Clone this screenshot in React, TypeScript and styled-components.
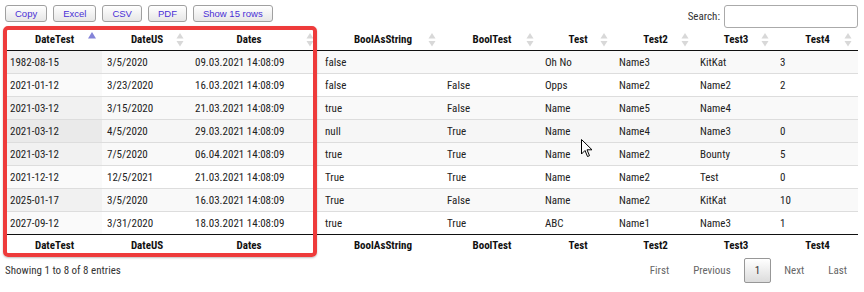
import React from "react";
import styled, { createGlobalStyle } from "styled-components";

const Global = createGlobalStyle`
  html, body { margin: 0; padding: 0; background: #fff; }
  body { font-family: "Roboto Condensed", Roboto, "Liberation Sans", sans-serif; color: #333; }
`;

const Page = styled.div`
  position: relative;
  width: 864px;
  height: 292px;
  padding: 5px 6px 0 5px;
  box-sizing: border-box;
  font-size: 11px;
`;

const TopBar = styled.div`
  display: flex;
  justify-content: space-between;
  align-items: flex-start;
  height: 24px;
`;

const ButtonGroup = styled.div`
  display: flex;
  gap: 6px;
`;

const ToolButton = styled.button`
  font-family: "Liberation Sans", Arial, sans-serif;
  font-size: 9.5px;
  line-height: 11px;
  height: 17px;
  padding: 0 9px;
  color: #4a2fd6;
  border: 1px solid #a0a0a0;
  border-radius: 3px;
  background: linear-gradient(to bottom, #ffffff 0%, #e6e6e6 100%);
  cursor: pointer;
`;

const SearchLabel = styled.label`
  display: flex;
  align-items: center;
  gap: 4px;
  font-size: 11px;
  color: #333;
`;

const SearchInput = styled.input`
  width: 134px;
  height: 23px;
  box-sizing: border-box;
  border: 1px solid #aaa;
  border-radius: 3px;
  padding: 2px 4px;
  background: #fff;
`;

const Table = styled.table`
  width: 853px;
  table-layout: fixed;
  border-collapse: separate;
  border-spacing: 0;
  font-size: 11px;
`;

const HeadCell = styled.th<{ $foot?: boolean; $shift?: number }>`
  position: relative;
  font-weight: bold;
  color: #111;
  text-align: center;
  padding: 0 ${(p) => 14 - (p.$shift ?? 0)}px 0 ${(p) => 14 + (p.$shift ?? 0)}px;
  height: 21px;
  line-height: 13px;
  white-space: nowrap;
  ${(p) => (p.$foot ? "border-top: 1px solid #111;" : "border-bottom: 1px solid #111;")}
`;

const SortIcon = styled.svg`
  position: absolute;
  right: 6px;
  top: 3px;
`;

const Row = styled.tr<{ $odd: boolean; $hover: boolean }>`
  background: ${(p) => (p.$hover ? "#f6f6f6" : p.$odd ? "#f9f9f9" : "#ffffff")};
`;

const Cell = styled.td<{ $first: boolean; $sorted: boolean; $bg: string }>`
  height: 22px;
  padding: 0 5px;
  line-height: 13px;
  white-space: nowrap;
  color: #222;
  border-top: ${(p) => (p.$first ? "none" : "1px solid #ddd")};
  background: ${(p) => (p.$sorted ? p.$bg : "transparent")};
`;

const FooterBar = styled.div`
  display: flex;
  justify-content: space-between;
  align-items: flex-start;
  padding-top: 2px;
`;

const Info = styled.div`
  padding-top: 6px;
  font-size: 11px;
  color: #333;
`;

const Paginate = styled.div`
  display: flex;
`;

const PageButton = styled.span<{ $current?: boolean }>`
  display: inline-block;
  box-sizing: border-box;
  height: 25px;
  line-height: 23px;
  padding: 0 10px;
  margin-left: 2px;
  font-size: 11px;
  color: ${(p) => (p.$current ? "#333" : "#666")};
  border: 1px solid ${(p) => (p.$current ? "#979797" : "transparent")};
  border-radius: 2px;
  background: ${(p) => (p.$current ? "linear-gradient(to bottom, #fff 0%, #dcdcdc 100%)" : "transparent")};
`;

const Highlight = styled.div`
  position: absolute;
  left: 3px;
  top: 26px;
  width: 314px;
  height: 231px;
  box-sizing: border-box;
  border: 4px solid #ee3b3b;
  border-radius: 5px;
  pointer-events: none;
  box-shadow: 0 1px 2px rgba(0, 0, 0, 0.25);
`;

const Cursor = styled.svg`
  position: absolute;
  left: 581px;
  top: 139px;
`;

const columns = [
  { name: "DateTest", width: 97, shift: 1 },
  { name: "DateUS", width: 88, shift: 1 },
  { name: "Dates", width: 130, shift: -6 },
  { name: "BoolAsString", width: 122, shift: 2 },
  { name: "BoolTest", width: 98, shift: 1 },
  { name: "Test", width: 74, shift: 1 },
  { name: "Test2", width: 81, shift: 1 },
  { name: "Test3", width: 80, shift: 1 },
  { name: "Test4", width: 83, shift: 1 },
];

const rows: string[][] = [
  ["1982-08-15", "3/5/2020", "09.03.2021 14:08:09", "false", "", "Oh No", "Name3", "KitKat", "3"],
  ["2021-01-12", "3/23/2020", "16.03.2021 14:08:09", "false", "False", "Opps", "Name2", "Name2", "2"],
  ["2021-03-12", "3/15/2020", "21.03.2021 14:08:09", "true", "False", "Name", "Name5", "Name4", ""],
  ["2021-03-12", "4/5/2020", "29.03.2021 14:08:09", "null", "True", "Name", "Name4", "Name3", "0"],
  ["2021-03-12", "7/5/2020", "06.04.2021 14:08:09", "true", "True", "Name", "Name2", "Bounty", "5"],
  ["2021-12-12", "12/5/2021", "21.03.2021 14:08:09", "True", "True", "Name", "Name2", "Test", "0"],
  ["2025-01-17", "3/5/2020", "16.03.2021 14:08:09", "True", "False", "Name", "Name2", "KitKat", "10"],
  ["2027-09-12", "3/31/2020", "18.03.2021 14:08:09", "true", "True", "ABC", "Name1", "Name3", "1"],
];

const HOVER = 3;

function SortBoth() {
  return (
    <SortIcon width="8" height="16" viewBox="0 0 8 16">
      <polygon points="0.5,6.5 4,1 7.5,6.5" fill="#d8d8d8" />
      <polygon points="0.5,9 4,14.5 7.5,9" fill="#d8d8d8" />
    </SortIcon>
  );
}

function SortAsc() {
  return (
    <SortIcon width="8" height="16" viewBox="0 0 8 16">
      <polygon points="0,6.5 4,0 8,6.5" fill="#8383d8" />
    </SortIcon>
  );
}

export default function App() {
  return (
    <>
      <Global />
      <Page>
        <TopBar>
          <ButtonGroup>
            <ToolButton>Copy</ToolButton>
            <ToolButton>Excel</ToolButton>
            <ToolButton>CSV</ToolButton>
            <ToolButton>PDF</ToolButton>
            <ToolButton>Show 15 rows</ToolButton>
          </ButtonGroup>
          <SearchLabel>
            Search:
            <SearchInput type="search" />
          </SearchLabel>
        </TopBar>
        <Table>
          <colgroup>
            {columns.map((c) => (
              <col key={c.name} style={{ width: c.width }} />
            ))}
          </colgroup>
          <thead>
            <tr>
              {columns.map((c, i) => (
                <HeadCell key={c.name} $shift={c.shift}>
                  {c.name}
                  {i === 0 ? <SortAsc /> : <SortBoth />}
                </HeadCell>
              ))}
            </tr>
          </thead>
          <tbody>
            {rows.map((r, ri) => {
              const odd = ri % 2 === 0;
              const hover = ri === HOVER;
              const sortedBg = hover ? "#eaeaea" : odd ? "#f1f1f1" : "#fafafa";
              return (
                <Row key={ri} $odd={odd} $hover={hover}>
                  {r.map((v, ci) => (
                    <Cell key={ci} $first={ri === 0} $sorted={ci === 0} $bg={sortedBg}>
                      {v}
                    </Cell>
                  ))}
                </Row>
              );
            })}
          </tbody>
          <tfoot>
            <tr>
              {columns.map((c) => (
                <HeadCell key={c.name} $foot $shift={c.shift}>
                  {c.name}
                </HeadCell>
              ))}
            </tr>
          </tfoot>
        </Table>
        <FooterBar>
          <Info>Showing 1 to 8 of 8 entries</Info>
          <Paginate>
            <PageButton>First</PageButton>
            <PageButton>Previous</PageButton>
            <PageButton $current>1</PageButton>
            <PageButton>Next</PageButton>
            <PageButton>Last</PageButton>
          </Paginate>
        </FooterBar>
        <Highlight />
        <Cursor width="12" height="19" viewBox="0 0 12 19">
          <path d="M0.5,0.5 L0.5,15 L4,11.5 L6.5,17.5 L8.5,16.7 L6,10.8 L11,10.8 Z" fill="#fff" stroke="#000" strokeWidth="1" strokeLinejoin="round" />
        </Cursor>
      </Page>
    </>
  );
}
